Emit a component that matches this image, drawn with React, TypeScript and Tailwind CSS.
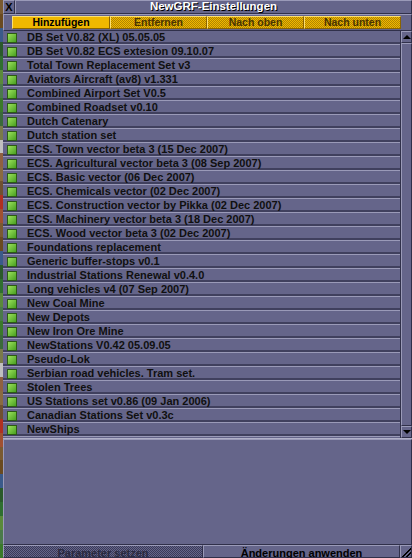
import React from "react";

const items = [
  "DB Set V0.82 (XL) 05.05.05",
  "DB Set V0.82 ECS extesion 09.10.07",
  "Total Town Replacement Set v3",
  "Aviators Aircraft (av8) v1.331",
  "Combined Airport Set V0.5",
  "Combined Roadset v0.10",
  "Dutch Catenary",
  "Dutch station set",
  "ECS. Town vector beta 3 (15 Dec 2007)",
  "ECS. Agricultural vector beta 3 (08 Sep 2007)",
  "ECS. Basic vector (06 Dec 2007)",
  "ECS. Chemicals vector (02 Dec 2007)",
  "ECS. Construction vector by Pikka (02 Dec 2007)",
  "ECS. Machinery vector beta 3 (18 Dec 2007)",
  "ECS. Wood vector beta 3 (02 Dec 2007)",
  "Foundations replacement",
  "Generic buffer-stops v0.1",
  "Industrial Stations Renewal v0.4.0",
  "Long vehicles v4 (07 Sep 2007)",
  "New Coal Mine",
  "New Depots",
  "New Iron Ore Mine",
  "NewStations V0.42 05.09.05",
  "Pseudo-Lok",
  "Serbian road vehicles. Tram set.",
  "Stolen Trees",
  "US Stations set v0.86 (09 Jan 2006)",
  "Canadian Stations Set v0.3c",
  "NewShips",
];

const strip = [
  "#7a5a30", "#3a7a2a", "#b03020", "#5a8a3a", "#8a6a40", "#2a5a2a", "#c0c0c0", "#6a4a20",
  "#3a6a3a", "#a05030", "#4a7a4a", "#705030", "#2f6f2f", "#906040", "#3a5a8a", "#7a7a4a",
];

const bevel = "border border-t-[#9a9ab8] border-l-[#9a9ab8] border-b-[#30304a] border-r-[#30304a]";

function Check() {
  return (
    <div className="w-[10px] h-[10px] bg-[#2c5a14] p-[1px] shrink-0">
      <div className="w-full h-full bg-[linear-gradient(135deg,#9ae05a,#48a020)]" />
    </div>
  );
}

export default function App() {
  const font = { fontFamily: '"Liberation Sans", Arial, sans-serif' };
  return (
    <div className="w-[412px] h-[558px] flex overflow-hidden bg-[#65658a]" style={font}>
      <div className="w-[3px] h-full flex flex-col">
        {Array.from({ length: 40 }).map((_, i) => (
          <div key={i} className="h-[14px]" style={{ backgroundColor: strip[(i * 7) % strip.length] }} />
        ))}
      </div>
      <div className="flex-1 flex flex-col">
        {/* title */}
        <div className="h-[14px] flex">
          <div className={`w-[12px] h-full bg-[#65658a] ${bevel} flex items-center justify-center text-[11px] font-bold text-black leading-none`}>
            X
          </div>
          <div className={`flex-1 h-full bg-[#65658a] ${bevel} flex items-center justify-center`}>
            <span className="text-[11.5px] font-bold text-white leading-none [text-shadow:1px_1px_0_#000]">
              NewGRF-Einstellungen
            </span>
          </div>
        </div>
        {/* buttons */}
        <div className={`h-[17px] ${bevel} flex items-center pl-[8px]`}>
          <div className="w-[98px] h-[13px] bg-[#f0b800] border border-t-[#fce070] border-l-[#fce070] border-b-[#8a6400] border-r-[#8a6400] flex items-center justify-center text-[10.5px] font-bold text-black leading-none">
            Hinzufügen
          </div>
          {["Entfernen", "Nach oben", "Nach unten"].map((t) => (
            <div
              key={t}
              className="w-[97px] h-[13px] bg-[repeating-conic-gradient(#f0b800_0_25%,#b08400_0_50%)] bg-[length:2px_2px] border border-t-[#fce070] border-l-[#fce070] border-b-[#8a6400] border-r-[#8a6400] flex items-center justify-center text-[10.5px] font-bold text-[#4a3400] leading-none"
            >
              {t}
            </div>
          ))}
        </div>
        {/* list */}
        <div className="h-[408px] flex border-b border-b-[#b0b0c8]">
          <div className="flex-1 flex flex-col">
            {items.map((t) => (
              <div
                key={t}
                className="h-[14px] flex items-center gap-[10px] pl-[4px] border-b border-b-[#9a9ab8] shadow-[inset_0_-2px_0_#40405e] text-[11px] font-bold text-[#101010] leading-none whitespace-nowrap"
              >
                <Check />
                <span>{t}</span>
              </div>
            ))}
          </div>
          <div className="w-[12px] flex flex-col border-l border-l-[#30304a]">
            <div className={`h-[12px] ${bevel} flex items-center justify-center`}>
              <div className="w-0 h-0 border-l-[4px] border-r-[4px] border-b-[4px] border-l-transparent border-r-transparent border-b-black" />
            </div>
            <div className={`flex-1 ${bevel}`} />
            <div className={`h-[12px] ${bevel} flex items-center justify-center`}>
              <div className="w-0 h-0 border-l-[4px] border-r-[4px] border-t-[4px] border-l-transparent border-r-transparent border-t-black" />
            </div>
          </div>
        </div>
        {/* empty panel */}
        <div className={`flex-1 ${bevel}`} />
        {/* bottom */}
        <div className="h-[13px] flex overflow-hidden">
          <div className={`w-[200px] h-full bg-[repeating-conic-gradient(#65658a_0_25%,#3a3a58_0_50%)] bg-[length:2px_2px] ${bevel} flex items-start pt-[2px] justify-center text-[11px] font-bold text-[#2a2a40] leading-none`}>
            Parameter setzen
          </div>
          <div className={`flex-1 h-full ${bevel} flex items-start pt-[2px] justify-center text-[11px] font-bold text-black leading-none`}>
            Änderungen anwenden
          </div>
          <div className={`w-[12px] h-full ${bevel} bg-[linear-gradient(135deg,transparent_55%,#000_55%,#000_65%,transparent_65%,transparent_75%,#000_75%,#000_85%,transparent_85%)]`} />
        </div>
      </div>
    </div>
  );
}
